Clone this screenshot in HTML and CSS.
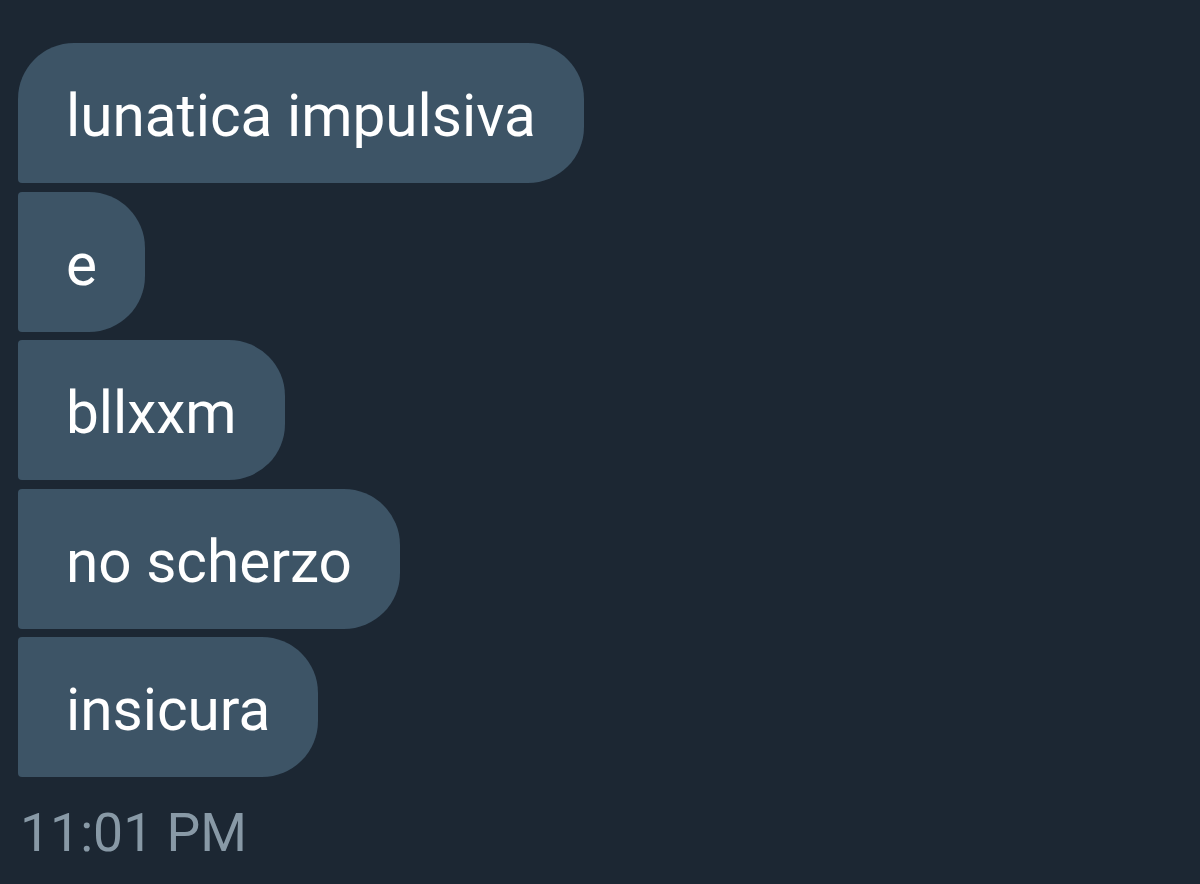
FILE: index.html
```html
<!DOCTYPE html>
<html lang="it">
<head>
<meta charset="utf-8">
<title>Messaggi</title>
<link rel="stylesheet" href="styles.css">
</head>
<body>
  <main class="thread">
    <div class="group">
      <div class="bubble">lunatica impulsiva</div>
      <div class="bubble">e</div>
      <div class="bubble">bllxxm</div>
      <div class="bubble">no scherzo</div>
      <div class="bubble">insicura</div>
    </div>
    <div class="time">11:01 PM</div>
  </main>
</body>
</html>
```
FILE: styles.css
```css
html, body {
  margin: 0;
  padding: 0;
}

body {
  background: #1c2733;
  font-family: Roboto, "Noto Sans", sans-serif;
  width: 1200px;
  height: 884px;
  overflow: hidden;
}

.thread {
  padding: 43px 0 0 18px;
}

.group {
  display: flex;
  flex-direction: column;
  align-items: flex-start;
  gap: 8.6px;
}

.bubble {
  box-sizing: border-box;
  background: #3d5466;
  color: #ffffff;
  font-size: 58.5px;
  line-height: 134px;
  height: 140px;
  padding: 6px 48px 0 48px;
  border-radius: 4px 56px 56px 4px;
  white-space: nowrap;
}

.bubble:first-child {
  border-top-left-radius: 56px;
}

.time {
  color: #8899a6;
  font-size: 53.5px;
  line-height: 1;
  margin-top: 29px;
  padding-left: 2px;
}
```
